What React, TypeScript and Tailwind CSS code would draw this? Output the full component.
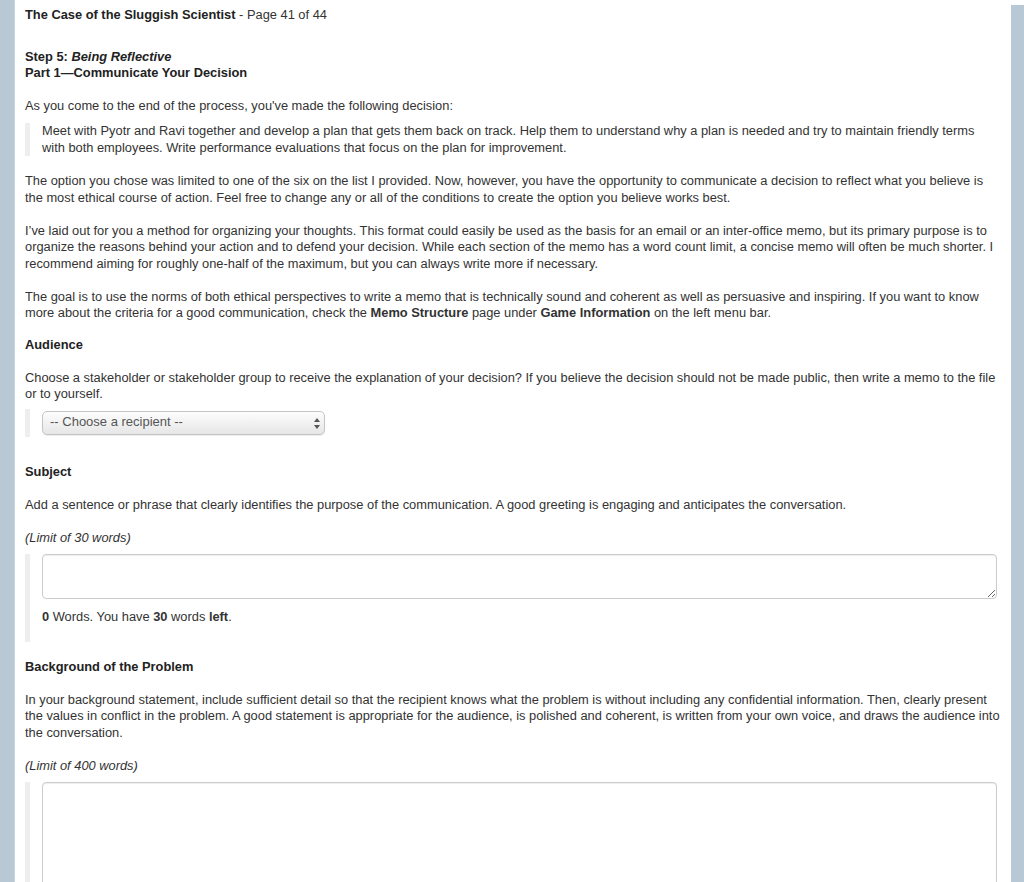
import { useState } from 'react';

// Word counter for the memo fields
function countWords(text: string) {
    const t = text.trim();
    return t ? t.split(/\s+/).length : 0;
}

function Quote({ children, className = '' }: { children: React.ReactNode; className?: string }) {
    return (
        <div className={`border-l-[5px] border-[#eeeeee] pl-3 ${className}`}>
            {children}
        </div>
    );
}

function MemoField({ limit, rows }: { limit: number; rows: number }) {
    const [text, setText] = useState('');
    const words = countWords(text);
    return (
        <>
            <p className="italic mb-[8px]">(Limit of {limit} words)</p>
            <Quote className="pb-[10px]">
                <textarea
                    value={text}
                    onChange={(e) => setText(e.target.value)}
                    rows={rows}
                    className="block w-[955px] border border-[#cccccc] rounded-[4px] bg-white px-2 py-1 text-[13px] shadow-[inset_0_1px_1px_rgba(0,0,0,0.075)] outline-none"
                    style={{ height: rows === 2 ? 45 : 200 }}
                />
                {limit === 30 && (
                    <p className="mt-[10px] mb-[6px]">
                        <b>{words}</b> Words. You have <b>{limit - words}</b> words <b>left</b>.
                    </p>
                )}
            </Quote>
        </>
    );
}

export default function App() {
    const [recipient, setRecipient] = useState('');

    return (
        <div className="flex min-h-[882px] bg-white text-[12.85px] leading-[16.5px] text-[#333333] font-['Liberation_Sans',Arial,sans-serif]">
            <div className="w-[15px] shrink-0 bg-[#b8c8d4] border-r border-[#c9d6df]" />

            <main className="flex-1 px-[10px] pt-[7px]">
                <p className="mb-[25px]">
                    <b className="text-[#222222]">The Case of the Sluggish Scientist</b> - Page 41 of 44
                </p>

                <div className="font-bold text-[#222222] mb-[16px]">
                    <div>Step 5: <i>Being Reflective</i></div>
                    <div>Part 1—Communicate Your Decision</div>
                </div>

                <p className="mb-[9px]">As you come to the end of the process, you've made the following decision:</p>

                <Quote className="mb-[17px] pr-[22px]">
                    <p>
                        Meet with Pyotr and Ravi together and develop a plan that gets them back on track. Help them to understand why a plan is needed and try to maintain friendly terms with both employees. Write performance evaluations that focus on the plan for improvement.
                    </p>
                </Quote>

                <p className="mb-[16.5px]">
                    The option you chose was limited to one of the six on the list I provided. Now, however, you have the opportunity to communicate a decision to reflect what you believe is the most ethical course of action. Feel free to change any or all of the conditions to create the option you believe works best.
                </p>

                <p className="mb-[16.5px]">
                    I’ve laid out for you a method for organizing your thoughts. This format could easily be used as the basis for an email or an inter-office memo, but its primary purpose is to organize the reasons behind your action and to defend your decision. While each section of the memo has a word count limit, a concise memo will often be much shorter. I recommend aiming for roughly one-half of the maximum, but you can always write more if necessary.
                </p>

                <p className="mb-[15px]">
                    The goal is to use the norms of both ethical perspectives to write a memo that is technically sound and coherent as well as persuasive and inspiring. If you want to know more about the criteria for a good communication, check the <b>Memo Structure</b> page under <b>Game Information</b> on the left menu bar.
                </p>

                <h3 className="font-bold text-[#222222] mb-[16.5px]">Audience</h3>

                <p className="mb-[6px] pr-[4px]">
                    Choose a stakeholder or stakeholder group to receive the explanation of your decision? If you believe the decision should not be made public, then write a memo to the file or to yourself.
                </p>

                <Quote className="py-[2px] mb-[27px]">
                    <div className="relative w-[283px]">
                        <select
                            value={recipient}
                            onChange={(e) => setRecipient(e.target.value)}
                            className="block w-full h-[24px] appearance-none rounded-[5px] border border-[#c4c4c4] bg-gradient-to-b from-[#fdfdfd] to-[#e6e6e6] pl-[7px] pr-6 text-[13px] text-[#555555] shadow-[0_1px_1px_rgba(0,0,0,0.08)] outline-none"
                        >
                            <option value="">-- Choose a recipient --</option>
                            <option value="pyotr">Pyotr</option>
                            <option value="ravi">Ravi</option>
                            <option value="both">Pyotr and Ravi</option>
                            <option value="file">To the file</option>
                        </select>
                        <svg className="pointer-events-none absolute right-[5px] top-[7px]" width="6" height="11" viewBox="0 0 6 11">
                            <path d="M3 0 L6 4 L0 4 Z" fill="#555" />
                            <path d="M0 7 L6 7 L3 11 Z" fill="#555" />
                        </svg>
                    </div>
                </Quote>

                <h3 className="font-bold text-[#222222] mb-[16.5px]">Subject</h3>

                <p className="mb-[16.5px]">
                    Add a sentence or phrase that clearly identifies the purpose of the communication. A good greeting is engaging and anticipates the conversation.
                </p>

                <MemoField limit={30} rows={2} />

                <h3 className="font-bold text-[#222222] mt-[17px] mb-[16.5px]">Background of the Problem</h3>

                <p className="mb-[16.5px]">
                    In your background statement, include sufficient detail so that the recipient knows what the problem is without including any confidential information. Then, clearly present the values in conflict in the problem. A good statement is appropriate for the audience, is polished and coherent, is written from your own voice, and draws the audience into the conversation.
                </p>

                <MemoField limit={400} rows={10} />
            </main>

            <div className="w-[13px] shrink-0 mt-[5px] bg-[#b8c8d4]" />
        </div>
    );
}
